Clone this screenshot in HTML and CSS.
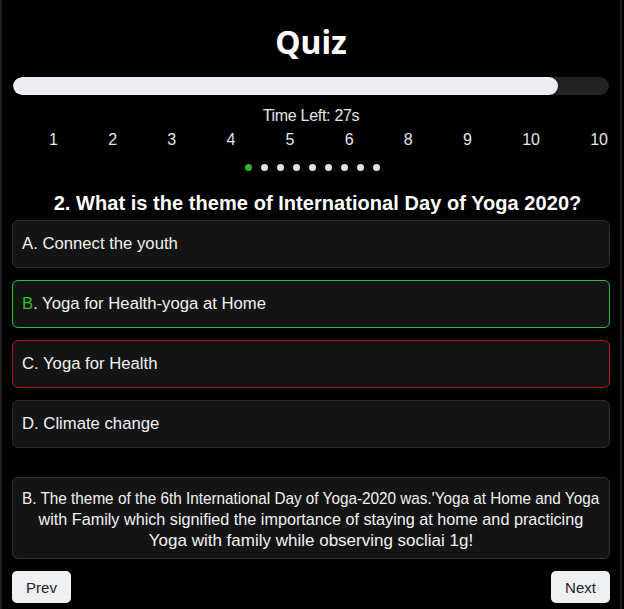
FILE: index.html
```html
<!DOCTYPE html>
<html lang="en">
<head>
<meta charset="utf-8">
<title>Quiz</title>
<link rel="stylesheet" href="styles.css">
</head>
<body>
<div class="app">
  <h1 class="title">Quiz</h1>
  <div class="progress"><div class="progress-fill" style="width: 91.5%"></div></div>
  <div class="timer">Time Left: 27s</div>
  <div class="numbers">
    <span>1</span><span>2</span><span>3</span><span>4</span><span>5</span><span>6</span><span>8</span><span>9</span><span>10</span><span>10</span>
  </div>
  <div class="dots">
    <span class="dot active"></span><span class="dot"></span><span class="dot"></span><span class="dot"></span><span class="dot"></span><span class="dot"></span><span class="dot"></span><span class="dot"></span><span class="dot"></span>
  </div>
  <h2 class="question">2. What is the theme of International Day of Yoga 2020?</h2>
  <div class="options">
    <div class="option">A. Connect the youth</div>
    <div class="option correct"><span class="letter">B</span>. Yoga for Health-yoga at Home</div>
    <div class="option wrong">C. Yoga for Health</div>
    <div class="option">D. Climate change</div>
  </div>
  <div class="explain">
    <span class="line line-1">B. The theme of the 6th International Day of Yoga-2020 was.'Yoga at Home and Yoga</span>
    <span class="line line-2">with Family which signified the importance of staying at home and practicing</span>
    <span class="line line-3">Yoga with family while observing socliai 1g!</span>
  </div>
  <div class="nav">
    <button class="btn">Prev</button>
    <button class="btn">Next</button>
  </div>
</div>
</body>
</html>
```
FILE: styles.css
```css
html, body {
  margin: 0;
  padding: 0;
  background: #000;
}
body {
  font-family: "Liberation Sans", Arial, sans-serif;
  color: #f2f2f2;
}
.app {
  box-sizing: border-box;
  width: 622px;
  height: 609px;
  border-left: 2px solid #1e1e1e;
  border-right: 2px solid #1e1e1e;
  padding: 0 10px;
  display: flex;
  flex-direction: column;
}
.title {
  margin: 22px 0 0;
  font-family: "Noto Sans", "Open Sans", sans-serif;
  font-size: 32px;
  font-weight: 700;
  line-height: 40px;
  text-align: center;
  color: #fff;
}
.progress {
  margin: 15px 1px 0 1px;
  height: 18px;
  border-radius: 9px;
  background: #222;
  overflow: hidden;
}
.progress-fill {
  height: 100%;
  background: #eceef3;
  border-radius: 9px;
}
.timer {
  margin-top: 11px;
  text-align: center;
  font-size: 16px;
  line-height: 20px;
  color: #e6e6e6;
  letter-spacing: -0.3px;
}
.numbers {
  display: flex;
  justify-content: space-between;
  padding: 4px 2px 0 37px;
  font-size: 16px;
  line-height: 20px;
  color: #e6e6e6;
}
.dots {
  display: flex;
  justify-content: center;
  gap: 9px;
  margin-top: 14px;
  padding-left: 2px;
}
.dot {
  width: 7px;
  height: 7px;
  border-radius: 50%;
  background: #dde1ea;
}
.dot.active {
  background: #2cb52c;
}
.question {
  margin: 20px 0 0;
  padding-left: 13px;
  font-size: 20px;
  font-weight: 700;
  line-height: 24px;
  text-align: center;
  color: #fff;
  letter-spacing: 0.05px;
}
.options {
  display: flex;
  flex-direction: column;
  gap: 12px;
  margin-top: 5px;
}
.option {
  box-sizing: border-box;
  height: 48px;
  display: flex;
  align-items: center;
  padding: 0 9px;
  background: #141414;
  border: 1px solid #2c2c2c;
  border-radius: 6px;
  font-size: 16.7px;
  color: #f2f2f2;
}
.option.correct {
  border-color: #2ec02e;
}
.option.correct .letter {
  color: #2ec02e;
}
.option.wrong {
  border-color: #c0101a;
}
.explain {
  box-sizing: border-box;
  margin-top: 29px;
  height: 82px;
  padding: 10px 0;
  display: flex;
  flex-direction: column;
  align-items: center;
  background: #141414;
  border: 1px solid #333;
  border-radius: 6px;
  overflow: hidden;
  font-size: 17px;
  line-height: 21px;
  color: #f2f2f2;
}
.line {
  display: block;
  white-space: nowrap;
  transform-origin: center center;
}
.line-1 {
  transform: scaleX(0.9);
}
.line-2 {
  transform: scaleX(0.953);
}
.line-3 {
  transform: none;
}
.nav {
  display: flex;
  justify-content: space-between;
  margin-top: 12px;
}
.btn {
  width: 59px;
  height: 32px;
  border: none;
  border-radius: 5px;
  background: #eef0f4;
  color: #222;
  font-family: "Liberation Sans", Arial, sans-serif;
  font-size: 15px;
  padding: 0;
}
```
